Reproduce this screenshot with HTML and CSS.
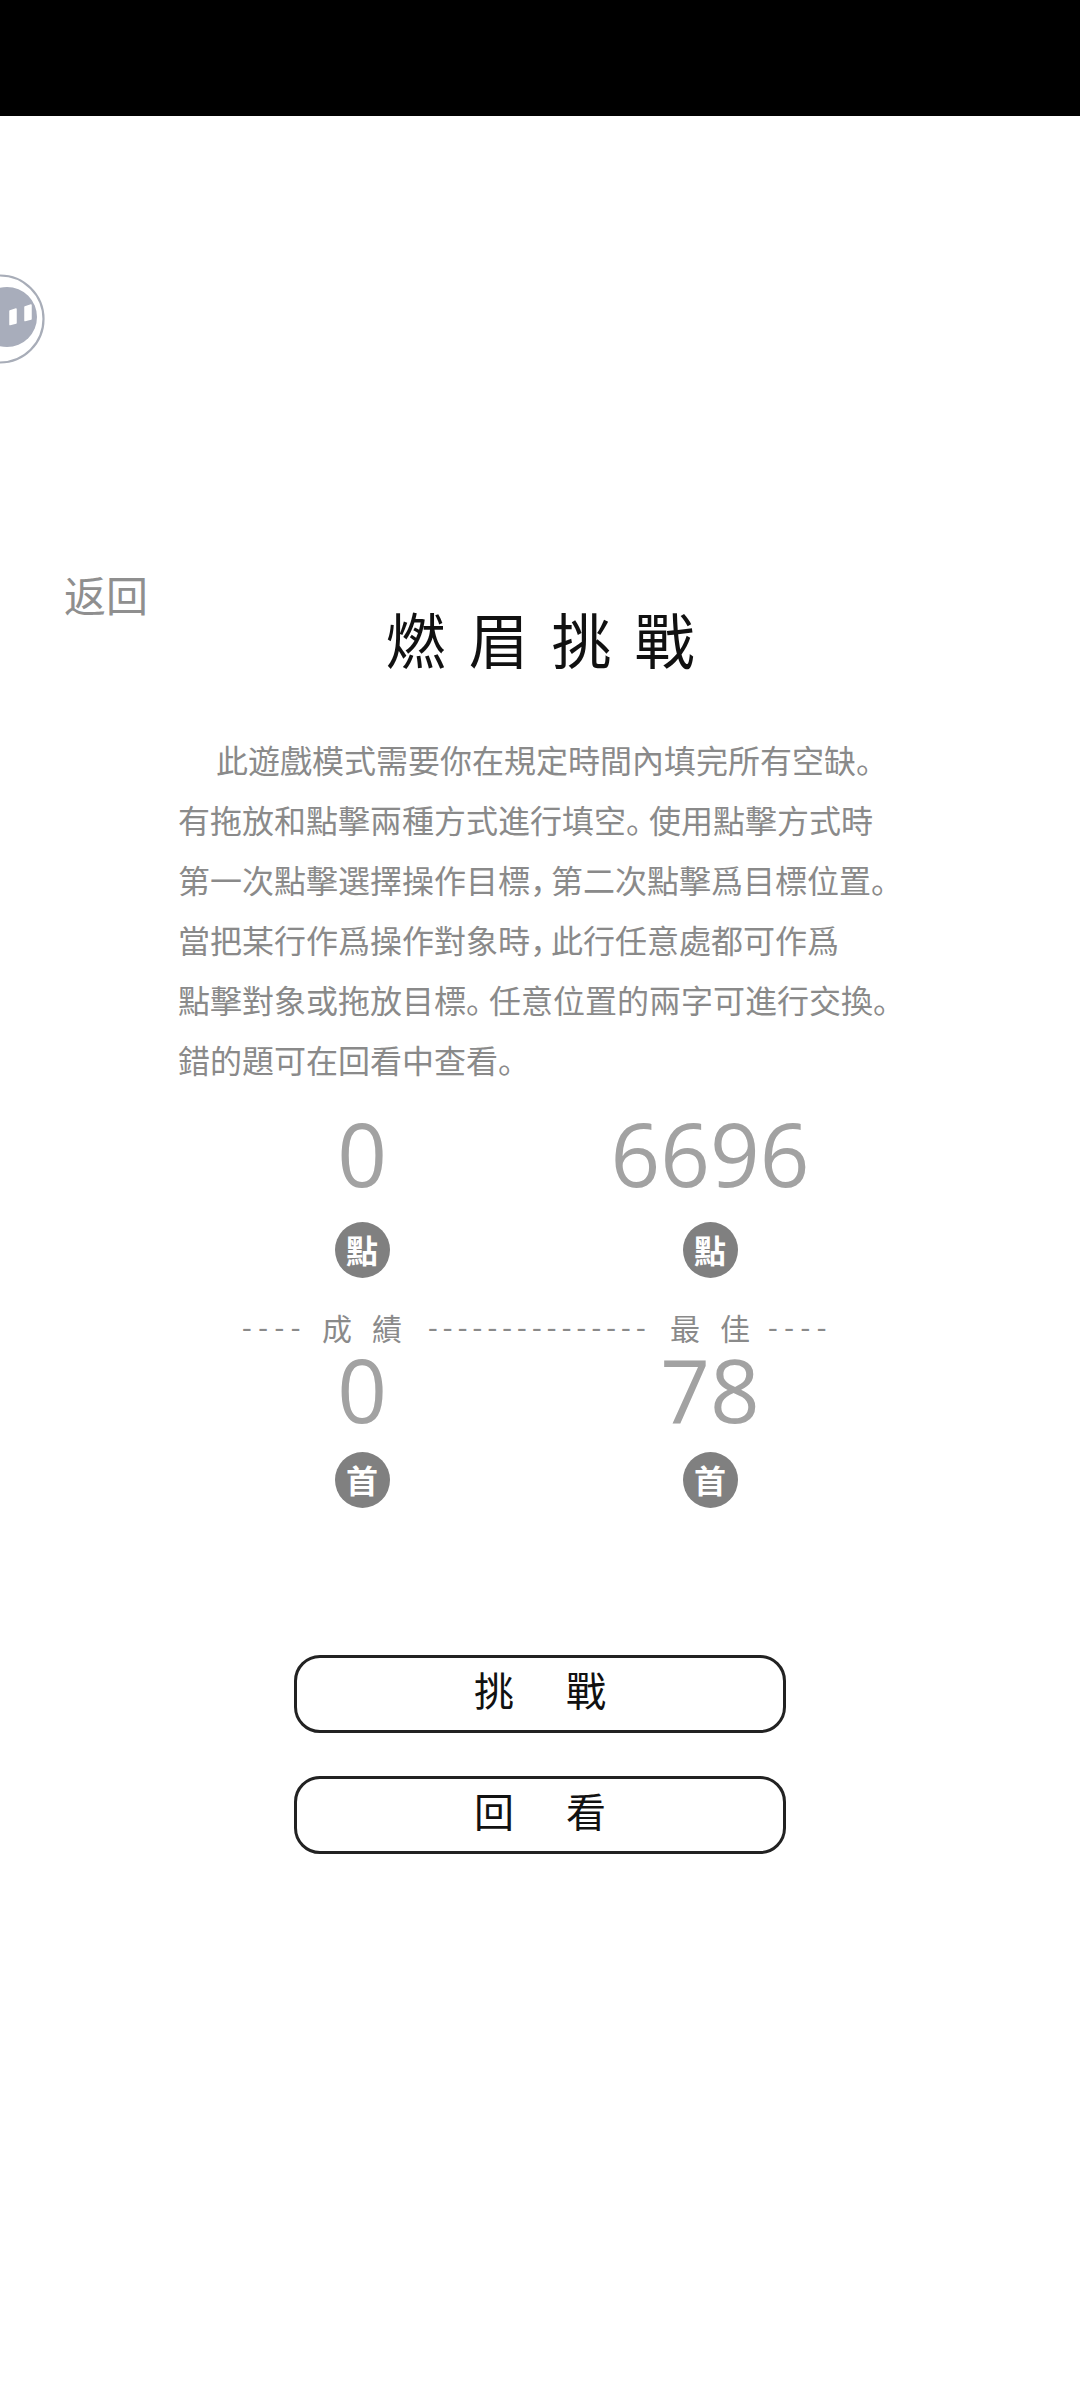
FILE: index.html
```html
<!DOCTYPE html>
<html lang="zh-Hans">
<head>
  <meta charset="utf-8">
  <title>燃眉挑戰</title>
  <link rel="stylesheet" href="styles.css">
</head>
<body>
  <div class="status-bar"></div>

  <!-- floating ball stuck to the left edge -->
  <div class="float-ball">
    <svg width="46" height="92" viewBox="0 0 46 92">
      <circle cx="0" cy="46" r="43.500" fill="none" stroke="#a8adb8" stroke-width="2.200"/>
      <circle cx="7" cy="44" r="30" fill="#a8adbb"/>
      <path d="M10 38 L16 36 V50 L10 51.500 Z M25 34 L31 32 V46 L25 47.500 Z" fill="#fff" stroke="#fff" stroke-width="1.500" stroke-linejoin="round"/>
    </svg>
  </div>

  <main class="page">
    <a class="back">返回</a>
    <h1 class="title">燃眉挑戰</h1>

    <p class="intro">
      <span class="first-line">此遊戲模式需要你在規定時間內填完所有空缺。</span><br>
      有拖放和點擊兩種方式進行填空<span class="tight">。</span>使用點擊方式時<br>
      第一次點擊選擇操作目標<span class="tight-comma">，</span>第二次點擊爲目標位置。<br>
      當把某行作爲操作對象時<span class="tight-comma">，</span>此行任意處都可作爲<br>
      點擊對象或拖放目標<span class="tight">。</span>任意位置的兩字可進行交換。<br>
      錯的題可在回看中查看。
    </p>

    <section class="scores">
      <div class="score-row">
        <div class="value">0</div>
        <div class="value">6696</div>
      </div>
      <div class="unit-row unit-row-points">
        <div class="unit">點</div>
        <div class="unit">點</div>
      </div>
      <div class="divider">
        <span class="dash dash-short">----</span>
        <span class="label">成績</span>
        <span class="dash dash-long">---------------</span>
        <span class="label">最佳</span>
        <span class="dash dash-short">----</span>
      </div>
      <div class="score-row">
        <div class="value">0</div>
        <div class="value">78</div>
      </div>
      <div class="unit-row unit-row-songs">
        <div class="unit">首</div>
        <div class="unit">首</div>
      </div>
    </section>

    <div class="actions">
      <button class="btn">挑戰</button>
      <button class="btn">回看</button>
    </div>
  </main>
</body>
</html>
```

FILE: styles.css
```css
html, body {
  margin: 0;
  padding: 0;
}

body {
  width: 1080px;
  height: 2403px;
  position: relative;
  overflow: hidden;
  background: #fff;
  font-family: "Noto Sans CJK SC", "Noto Sans CJK TC", sans-serif;
}

.status-bar {
  height: 116px;
  background: #000;
}

.float-ball {
  position: absolute;
  left: 0;
  top: 273px;
  height: 92px;
}

.page {
  padding-top: 466px;
}

.back {
  display: block;
  height: 24px;
  margin-left: 64px;
  font-size: 42px;
  line-height: 24px;
  color: #8f8f8f;
}

.title {
  margin: 1px 0 0;
  height: 62px;
  font-size: 60px;
  font-weight: 400;
  line-height: 62px;
  letter-spacing: 23px;
  text-indent: 23px;
  text-align: center;
  color: #111;
}

.intro {
  margin: 60px 0 0 178px;
  font-size: 32px;
  line-height: 60px;
  color: #8a8a8a;
  white-space: nowrap;
}

.first-line {
  margin-left: 38px;
}

/* full stop and comma in the middle of a line take less room */
.tight {
  letter-spacing: -9px;
}

.tight-comma {
  letter-spacing: -11px;
}

.scores {
  margin-top: 16px;
}

.score-row, .unit-row {
  display: grid;
  grid-template-columns: 348px 348px;
  margin-left: 188px;
  justify-items: center;
  align-items: center;
}

.score-row {
  height: 96px;
}

.value {
  font-family: "Open Sans", sans-serif;
  font-size: 87px;
  line-height: 96px;
  color: #a2a2a2;
}

.unit-row {
  height: 56px;
}

.unit-row-points {
  margin-top: 21px;
}

.unit-row-songs {
  margin-top: 15px;
}

.unit {
  width: 55px;
  height: 56px;
  border-radius: 50%;
  background: #808080;
  color: #fff;
  font-size: 32px;
  font-weight: 700;
  line-height: 54px;
  text-align: center;
}

.divider {
  display: flex;
  align-items: center;
  height: 28px;
  margin-top: 35px;
  margin-left: 242px;
  color: #8a8a8a;
}

.dash {
  flex: none;
  font-family: "Open Sans", sans-serif;
  font-size: 30px;
  line-height: 28px;
  white-space: nowrap;
}

.dash-short {
  width: 80px;
  letter-spacing: 6.600px;
}

.dash-long {
  width: 242px;
  margin-left: 8px;
  letter-spacing: 5.200px;
}

.label {
  flex: none;
  width: 98px;
  font-size: 30px;
  line-height: 28px;
  letter-spacing: 20px;
  white-space: nowrap;
}

.actions {
  display: flex;
  flex-direction: column;
  align-items: center;
  gap: 43px;
  margin-top: 147px;
}

.btn {
  display: block;
  box-sizing: border-box;
  width: 492px;
  height: 78px;
  padding: 0 0 10px;
  border: 3px solid #222;
  border-radius: 26px;
  background: #fff;
  color: #111;
  font-family: "Noto Sans CJK SC", "Noto Sans CJK TC", sans-serif;
  font-size: 40px;
  letter-spacing: 52px;
  text-indent: 52px;
  line-height: 56px;
}
```
